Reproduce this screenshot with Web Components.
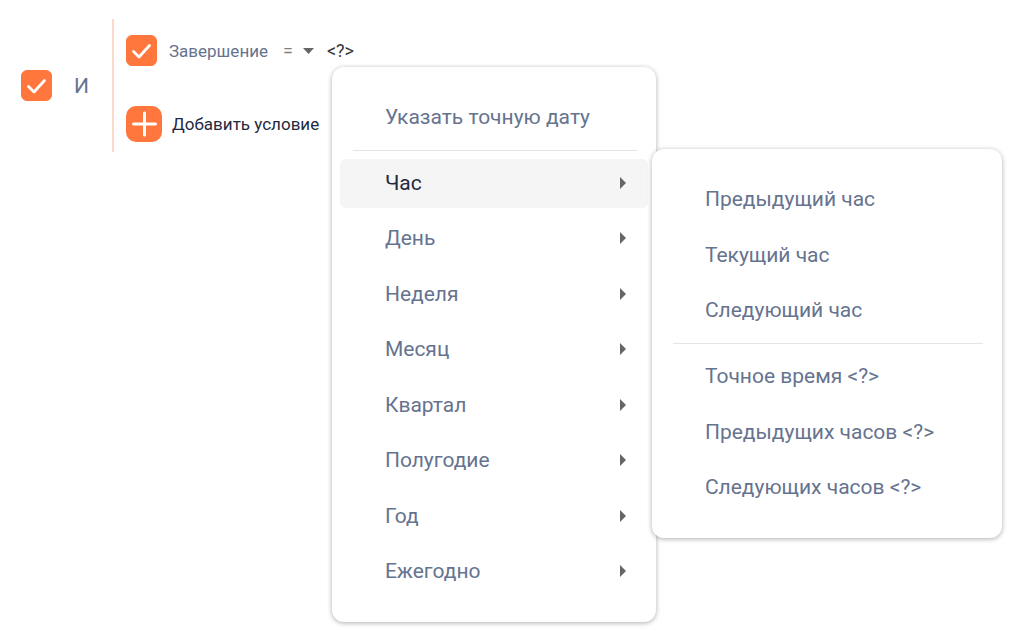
<!DOCTYPE html>
<html lang="ru">
<head>
<meta charset="utf-8">
<meta name="viewport" content="width=device-width, initial-scale=1">
<title>Условия фильтра</title>
<style>
body { margin: 0; min-height: 100vh; background: #fff; color: #66738f; font-family: Roboto, "Liberation Sans", sans-serif; font-size: 17px; }
</style>
</head>
<body>
<filter-builder></filter-builder>
<script>
const define = (name, html, setup) => {
  const template = document.createElement('template');
  template.innerHTML = html;
  customElements.define(name, class extends HTMLElement {
    connectedCallback() {
      if (this.shadowRoot) return;
      this.attachShadow({ mode: 'open' }).append(template.content.cloneNode(true));
      if (setup) setup(this, this.shadowRoot);
    }
  });
};

define('check-field', `
<style>
:host { display: block; }
label { display: flex; align-items: center; gap: var(--check-gap, 12px); }
.box { display: grid; flex: none; width: 31px; height: 31px; }
input, svg { grid-area: 1 / 1; width: 100%; height: 100%; margin: 0; }
input { appearance: none; border-radius: 6px; border: 1px solid #ff773c; }
input:checked { background: #ff773c; }
svg { pointer-events: none; visibility: hidden; }
input:checked + svg { visibility: visible; }
</style>
<label>
  <span class="box">
    <input type="checkbox" checked>
    <svg viewBox="0 0 31 31" fill="none" stroke="#fff" stroke-width="2.8" stroke-linecap="round" stroke-linejoin="round" aria-hidden="true"><path d="M7.500 16.500 13 22 23.500 10.500"/></svg>
  </span>
  <slot></slot>
</label>`);

define('add-button', `
<style>
:host { display: block; }
button { display: flex; align-items: center; gap: 10px; padding: 0; border: 0; background: none; font: inherit; color: #1f2940; white-space: nowrap; }
svg { flex: none; width: 36px; height: 36px; }
</style>
<button type="button">
  <svg viewBox="0 0 36 36" aria-hidden="true"><rect width="36" height="36" rx="10" fill="#ff773c"/><path d="M7.500 18h22M18.500 7v22" stroke="#fff" stroke-width="3" stroke-linecap="round"/></svg>
  <slot></slot>
</button>`);

define('menu-item', `
<style>
:host { display: block; }
button { display: flex; align-items: center; justify-content: space-between; box-sizing: border-box; width: 100%; height: 49px; padding: 0 22px 0 45px; border: 0; border-radius: 6px; background: none; font: inherit; color: inherit; text-align: left; white-space: nowrap; }
:host([active]) button { background: #f5f5f5; color: #1f2940; }
svg { display: none; flex: none; width: 6px; height: 12px; }
:host([parent]) svg { display: block; }
</style>
<button type="button" role="menuitem"><slot></slot><svg viewBox="0 0 6 12" fill="#666" aria-hidden="true"><path d="M0 0 6 6 0 12z"/></svg></button>`,
(host, root) => {
  if (host.hasAttribute('parent')) root.querySelector('button').setAttribute('aria-haspopup', 'menu');
});

define('menu-group', `
<style>
:host { display: flex; flex-direction: column; justify-content: space-between; gap: 6px; }
</style>
<slot></slot>`);

define('menu-divider', `
<style>
:host { display: block; margin: 8px 11px 8px 13px; border-top: 1px solid #e4e4e4; }
</style>`);

define('menu-panel', `
<style>
:host { display: block; box-sizing: border-box; padding: 26px 8px; border-radius: 12px; background: #fff; box-shadow: 0 1px 5px rgba(0, 0, 0, .32); font-size: 21px; color: #66738f; }
</style>
<slot></slot>`);

define('date-menu', `
<style>
:host { display: block; }
.main { width: 324px; }
.periods { min-height: 437px; }
.sub { position: absolute; top: 82px; left: 320px; width: 350px; }
.sub menu-group { min-height: 160px; }
</style>
<menu-panel class="main" role="menu">
  <menu-item>Указать точную дату</menu-item>
  <menu-divider></menu-divider>
  <menu-group class="periods">
    <menu-item parent active>Час</menu-item>
    <menu-item parent>День</menu-item>
    <menu-item parent>Неделя</menu-item>
    <menu-item parent>Месяц</menu-item>
    <menu-item parent>Квартал</menu-item>
    <menu-item parent>Полугодие</menu-item>
    <menu-item parent>Год</menu-item>
    <menu-item parent>Ежегодно</menu-item>
  </menu-group>
</menu-panel>
<menu-panel class="sub" role="menu">
  <menu-group>
    <menu-item>Предыдущий час</menu-item>
    <menu-item>Текущий час</menu-item>
    <menu-item>Следующий час</menu-item>
  </menu-group>
  <menu-divider></menu-divider>
  <menu-group>
    <menu-item>Точное время &lt;?&gt;</menu-item>
    <menu-item>Предыдущих часов &lt;?&gt;</menu-item>
    <menu-item>Следующих часов &lt;?&gt;</menu-item>
  </menu-group>
</menu-panel>`);

define('condition-row', `
<style>
:host { display: flex; align-items: center; }
button { padding: 0; border: 0; background: none; font: inherit; font-size: 18px; line-height: 20px; color: #333; }
.operator { display: flex; align-items: center; gap: 10px; margin: 0 13px 0 15px; color: #808080; }
.operator svg { width: 11px; height: 6px; }
.value { position: relative; }
date-menu { position: absolute; top: 26px; left: 5px; }
</style>
<check-field>Завершение</check-field>
<button class="operator" type="button" aria-haspopup="listbox">=<svg viewBox="0 0 11 6" fill="#666" aria-hidden="true"><path d="M0 0h11L5.500 6z"/></svg></button>
<div class="value">
  <button type="button" aria-haspopup="menu" aria-expanded="true">&lt;?&gt;</button>
  <date-menu></date-menu>
</div>`);

define('filter-builder', `
<style>
:host { display: flex; align-items: stretch; padding: 19px 21px; }
.joint { align-self: center; padding-right: 23px; font-size: 21px; --check-gap: 22px; }
.conditions { display: flex; flex-direction: column; align-items: flex-start; gap: 40px; padding: 16px 0 10px 12px; border-left: 2px solid #fdd9cb; }
</style>
<check-field class="joint">И</check-field>
<div class="conditions">
  <condition-row></condition-row>
  <add-button>Добавить условие</add-button>
</div>`);
</script>
</body>
</html>
